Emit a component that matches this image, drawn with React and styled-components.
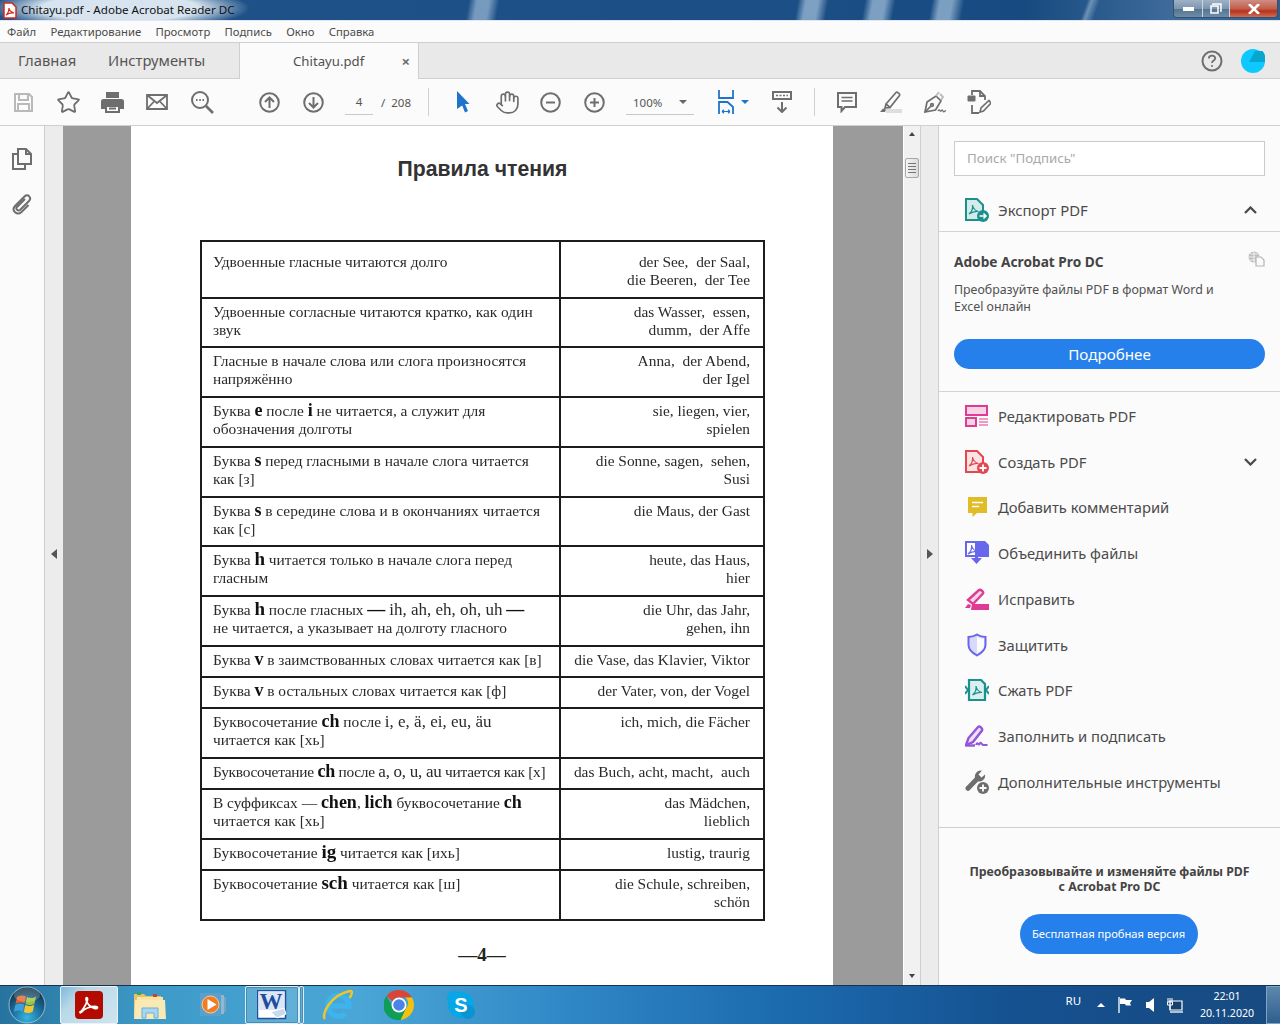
import React from "react";
import styled, { createGlobalStyle } from "styled-components";
import { Hand, Star } from "lucide-react";

const Global = createGlobalStyle`
  html, body { margin: 0; padding: 0; height: 100%; overflow: hidden; background: #fbfbfb; }
  * { box-sizing: border-box; }
  #root { height: 100%; }
`;

const UI = `"Noto Sans", "Open Sans", "Liberation Sans", sans-serif`;

const Window = styled.div`
  width: 1280px;
  height: 1024px;
  display: flex;
  flex-direction: column;
  font-family: ${UI};
  color: #4b4b4b;
  overflow: hidden;
`;

const TitleBar = styled.div`
  height: 21px;
  flex: none;
  display: flex;
  align-items: flex-start;
  padding-left: 3px;
  border-bottom: 1px solid #dfe8f0;
  background:
    radial-gradient(ellipse 130px 22px at 120px 8px, rgba(225, 236, 245, 0.95) 60%, rgba(225, 236, 245, 0) 100%),
    linear-gradient(100deg, transparent 462px, rgba(190, 215, 235, 0.55) 470px, rgba(190, 215, 235, 0.55) 482px, transparent 492px),
    linear-gradient(100deg, transparent 786px, rgba(190, 215, 235, 0.6) 794px, rgba(190, 215, 235, 0.6) 806px, transparent 816px),
    linear-gradient(100deg, transparent 852px, rgba(190, 215, 235, 0.6) 860px, rgba(190, 215, 235, 0.6) 872px, transparent 882px),
    linear-gradient(100deg, transparent 918px, rgba(190, 215, 235, 0.6) 926px, rgba(190, 215, 235, 0.6) 938px, transparent 950px),
    linear-gradient(110deg, transparent 1022px, rgba(190, 215, 235, 0.45) 1026px, transparent 1034px),
    linear-gradient(90deg, #1f5288 0%, #1c4f86 60%, #174a80 80%, #3f6c9b 92%, #2f5f92 100%);
`;

const TitleIcon = styled.svg`
  margin-top: 2px;
  flex: none;
`;

const TitleText = styled.span`
  font-size: 11.6px;
  line-height: 20px;
  margin-left: 4px;
  color: #111;
  white-space: nowrap;
`;

const WinButtons = styled.div`
  margin-left: auto;
  margin-right: 2px;
  display: flex;
  height: 18px;
  border: 1px solid #33506f;
  border-top: 0;
  border-radius: 0 0 4px 4px;
  overflow: hidden;
`;

const WinButton = styled.div`
  width: ${(p) => p.$w}px;
  display: flex;
  align-items: center;
  justify-content: center;
  border-left: ${(p) => (p.$first ? "0" : "1px solid #c9d6e2")};
  background: ${(p) =>
    p.$close
      ? "linear-gradient(#cf8d82 0%, #c2604e 50%, #b8321c 65%, #cf6d55 100%)"
      : "linear-gradient(#9fb2c6 0%, #7d95ae 50%, #557590 55%, #6f8ca8 100%)"};
`;

const MenuBar = styled.div`
  height: 22px;
  flex: none;
  display: flex;
  align-items: center;
  gap: 14.3px;
  padding-left: 7px;
  font-size: 11.3px;
  background: #fbfbfb;
  border-bottom: 1px solid #cfcfcf;
`;

const TabBar = styled.div`
  height: 36px;
  flex: none;
  display: flex;
  background: #e9e9e9;
  border-bottom: 1px solid #cfcfcf;
`;

const NavTab = styled.div`
  width: ${(p) => p.$w}px;
  padding-left: ${(p) => p.$pad}px;
  line-height: 35px;
  font-size: 14.8px;
  color: #555;
`;

const DocTab = styled.div`
  width: 180px;
  height: 36px;
  display: flex;
  align-items: center;
  padding: 0 8px 0 53px;
  font-size: 13.2px;
  background: #fbfbfb;
  border-left: 1px solid #cfcfcf;
  border-right: 1px solid #cfcfcf;
  color: #505050;
`;

const CloseX = styled.span`
  margin-left: auto;
  font-size: 15px;
  font-weight: 700;
  color: #6e6e6e;
`;

const TabRight = styled.div`
  margin-left: auto;
  display: flex;
  align-items: center;
  gap: 18px;
  padding-right: 15px;
`;

const ToolBar = styled.div`
  height: 47px;
  flex: none;
  display: flex;
  align-items: center;
  padding-left: 1.5px;
  background: #fbfbfb;
  border-bottom: 1px solid #cfcfcf;
`;

const Tool = styled.div`
  width: ${(p) => p.$w || 44.5}px;
  height: 30px;
  flex: none;
  display: flex;
  align-items: center;
  justify-content: center;
`;

const Gap = styled.div`
  width: ${(p) => p.$w}px;
  flex: none;
`;

const Divider = styled.div`
  width: 1px;
  height: 28px;
  flex: none;
  background: #cfcfcf;
`;

const PageField = styled.div`
  width: 28px;
  height: 25px;
  flex: none;
  margin-top: 1px;
  border-bottom: 1px solid #c8c8c8;
  font-size: 11.5px;
  line-height: 24px;
  text-align: center;
  color: #555;
`;

const PageTotal = styled.div`
  width: 44px;
  flex: none;
  padding-left: 8px;
  font-size: 11.5px;
  color: #555;
  white-space: pre;
`;

const ZoomField = styled.div`
  width: 68px;
  height: 25px;
  flex: none;
  margin-top: 1px;
  display: flex;
  align-items: center;
  justify-content: space-between;
  padding: 0 7px;
  border-bottom: 1px solid #c8c8c8;
  font-size: 11.5px;
  color: #555;
`;

const Caret = styled.span`
  width: 0;
  height: 0;
  flex: none;
  border-left: 4px solid transparent;
  border-right: 4px solid transparent;
  ${(p) =>
    p.$up
      ? `border-bottom: 4.5px solid ${p.$color || "#666"};`
      : `border-top: 4.5px solid ${p.$color || "#666"};`}
`;

const Body = styled.div`
  flex: 1;
  min-height: 0;
  display: flex;
`;

const LeftRail = styled.div`
  width: 45px;
  flex: none;
  display: flex;
  flex-direction: column;
  align-items: center;
  gap: 23px;
  padding: 22px 0 0;
  background: #fbfbfb;
  border-right: 1px solid #cfcfcf;
`;

const Strip = styled.div`
  width: ${(p) => p.$w}px;
  flex: none;
  display: flex;
  align-items: center;
  justify-content: center;
  padding-bottom: 3px;
  background: #ececec;
  border-right: ${(p) => (p.$edge ? "1px solid #cfcfcf" : "0")};
  border-left: ${(p) => (p.$lead ? "1px solid #cfcfcf" : "0")};
`;

const Arrow = styled.span`
  width: 0;
  height: 0;
  border-top: 5px solid transparent;
  border-bottom: 5px solid transparent;
  ${(p) => (p.$dir === "left" ? "border-right: 6px solid #555;" : "border-left: 6px solid #555;")}
`;

const Viewer = styled.div`
  width: 840px;
  flex: none;
  display: flex;
  padding-left: 68px;
  background: #9b9b9b;
  overflow: hidden;
`;

const Page = styled.div`
  width: 702px;
  flex: none;
  padding: 30px 68px 0 69px;
  background: #fff;
  color: #2a2a2a;
  font-family: "Liberation Serif", serif;
`;

const PageTitle = styled.h1`
  margin: 0 0 58px;
  height: 26px;
  font: 700 21.2px/26px "Liberation Sans", sans-serif;
  text-align: center;
  color: #333;
`;

const Table = styled.div`
  width: 565px;
  border: 2px solid #1c1c1c;
  border-bottom: 0;
  filter: blur(0.25px);
`;

const Row = styled.div`
  height: ${(p) => p.$h}px;
  display: flex;
  border-bottom: 2px solid #1c1c1c;
  font-size: 15.4px;
  line-height: 18px;
`;

const LeftCell = styled.div`
  width: 357px;
  flex: none;
  padding: ${(p) => p.$top}px 0 0 11px;
  letter-spacing: ${(p) => (p.$tight ? "-0.27px" : "0")};
  white-space: pre;
`;

const RightCell = styled.div`
  flex: 1;
  padding: ${(p) => p.$top}px 13px 0 0;
  border-left: 2px solid #1c1c1c;
  text-align: right;
  white-space: pre;
`;

const Key = styled.b`
  font-size: ${(p) => p.$size || 18}px;
  line-height: 0;
  color: #111;
`;

const Lat = styled.span`
  font-size: 17px;
  line-height: 0;
`;

const PageNumber = styled.div`
  margin-top: 23px;
  padding-right: 1px;
  text-align: center;
  font-size: 19px;
  font-weight: 700;
  line-height: 22px;
  color: #222;
`;

const ScrollTrack = styled.div`
  width: 17px;
  flex: none;
  display: flex;
  flex-direction: column;
  align-items: center;
  background: #f1f1f1;
  border-left: 1px solid #fff;
`;

const ScrollArrow = styled.span`
  margin-top: ${(p) => p.$mt}px;
  width: 0;
  height: 0;
  border-left: 3.5px solid transparent;
  border-right: 3.5px solid transparent;
  ${(p) => (p.$up ? "border-bottom: 4px solid #444;" : "border-top: 4px solid #444;")}
`;

const Thumb = styled.div`
  width: 14px;
  height: 20px;
  margin-top: 22px;
  display: flex;
  flex-direction: column;
  justify-content: center;
  align-items: center;
  gap: 2px;
  border: 1px solid #a8a8a8;
  border-radius: 2px;
  background: linear-gradient(90deg, #f4f4f4, #dcdcdc);
`;

const Grip = styled.i`
  width: 8px;
  height: 1px;
  background: #777;
`;

const Panel = styled.div`
  flex: 1;
  display: flex;
  flex-direction: column;
  background: #fbfbfb;
`;

const Search = styled.div`
  margin: 15px 15px 0;
  height: 35px;
  padding-left: 12px;
  font-size: 13.3px;
  line-height: 33px;
  color: #a9a9a9;
  background: #fff;
  border: 1px solid #cbcbcb;
`;

const ExportRow = styled.div`
  margin-top: 16px;
  height: 40px;
  flex: none;
  display: flex;
  align-items: center;
  gap: 8px;
  padding: 0 23px 3px 25px;
  border-bottom: 1px solid #d4d4d4;
  font-size: 14.9px;
`;

const Chevron = styled.svg`
  margin-left: auto;
`;

const Card = styled.div`
  height: 160px;
  flex: none;
  padding: 22px 15px 0;
  border-bottom: 1px solid #d4d4d4;
`;

const CardTitle = styled.div`
  display: flex;
  justify-content: space-between;
  font-size: 13.7px;
  font-weight: 700;
  line-height: 16px;
  color: #444;
`;

const GlobeSvg = styled.svg`
  margin-top: -3px;
`;

const CardText = styled.p`
  margin: 11px 0 0;
  font-size: 12.4px;
  line-height: 17px;
  color: #505050;
`;

const BlueButton = styled.div`
  margin-top: 24px;
  height: 30px;
  border-radius: 15px;
  background: #2680eb;
  color: #fff;
  font-size: 15.2px;
  line-height: 30px;
  text-align: center;
`;

const ToolList = styled.div`
  height: 436px;
  flex: none;
  padding-top: 1px;
  border-bottom: 1px solid #cfcfcf;
`;

const ToolItem = styled.div`
  height: 45.75px;
  display: flex;
  align-items: center;
  gap: 8px;
  padding: 0 23px 0 25px;
  font-size: 14.75px;
`;

const IconSlot = styled.span`
  width: 26px;
  height: 26px;
  flex: none;
  display: flex;
  align-items: center;
  justify-content: center;
`;

const Promo = styled.div`
  flex: 1;
  display: flex;
  flex-direction: column;
  align-items: center;
  padding-top: 36px;
  font-size: 12.3px;
  font-weight: 700;
  line-height: 15px;
  color: #444;
  text-align: center;
`;

const TrialButton = styled.div`
  width: 178px;
  height: 40px;
  margin: 20px 2px 0 0;
  border-radius: 20px;
  background: #2680eb;
  color: #fff;
  font-size: 11.2px;
  font-weight: 400;
  line-height: 40px;
`;

const TaskBar = styled.div`
  height: 39px;
  flex: none;
  display: flex;
  align-items: center;
  border-top: 1px solid #16324f;
  background: linear-gradient(90deg, #27739f 0%, #3e9bc8 12%, #4aa6d6 28%, #2f86c5 45%, #1c6cb0 60%, #15508f 80%, #174a80 100%);
  color: #fff;
`;

const Orb = styled.div`
  width: 60px;
  flex: none;
  display: flex;
  justify-content: center;
  padding-right: 6px;
`;

const TaskItem = styled.div`
  width: ${(p) => p.$w}px;
  height: 38px;
  flex: none;
  display: flex;
  align-items: center;
  justify-content: center;
  ${(p) =>
    p.$state === "active" &&
    "background: linear-gradient(135deg, #7db9d9 0%, #b9d9e9 30%, #cfe4ef 100%); border: 1px solid #e8f2f8; border-radius: 2px;"}
  ${(p) =>
    p.$state === "open" &&
    "background: rgba(255,255,255,0.14); border: 1px solid #dcebf5; box-shadow: inset 0 0 0 1px rgba(0,40,80,0.25); border-radius: 2px;"}
`;

const Tray = styled.div`
  margin-left: auto;
  display: flex;
  align-items: center;
  height: 38px;
`;

const TrayLang = styled.span`
  font-size: 11.5px;
  width: 31px;
  padding-bottom: 10px;
`;

const TrayIcon = styled.span`
  width: 24.5px;
  flex: none;
  display: flex;
  justify-content: center;
`;

const Clock = styled.div`
  width: 78px;
  padding-left: 2px;
  text-align: center;
  font-size: 10.6px;
  line-height: 17px;
`;

const ShowDesktop = styled.div`
  width: 14px;
  height: 38px;
  margin-left: 1px;
  border: 1px solid #7ea3c4;
  border-right: 0;
  background: linear-gradient(#5d87ad, #2f5f90);
`;

// toolbar drawings
const G = "#6e6e6e";
const Save = () => (
  <svg width="21" height="21" viewBox="0 0 21 21" fill="none" stroke="#b9b9b9" strokeWidth="2">
    <path d="M2 2h14l3 3v14H2z" />
    <path d="M6 2v6h9V2M5 19v-7h11v7" />
  </svg>
);
const Printer = () => (
  <svg width="23" height="21" viewBox="0 0 23 21">
    <path fill={G} d="M5 0h13v6H5zM2.500 7h18A2.500 2.500 0 0 1 23 9.500V17h-4v-4H4v4H0V9.500A2.500 2.500 0 0 1 2.500 7z" />
    <path fill="none" stroke={G} strokeWidth="2" d="M5 14h13v6H5zM8 16.500h7" />
  </svg>
);
const Envelope = () => (
  <svg width="22" height="16" viewBox="0 0 22 16" fill="none" stroke={G} strokeWidth="1.8">
    <path d="M1 1h20v14H1zM1 1l10 8 10-8M1 15l7.500-8M21 15l-7.500-8" />
  </svg>
);
const Find = () => (
  <svg width="24" height="24" viewBox="0 0 24 24" fill="none" stroke={G}>
    <circle cx="10" cy="10" r="8" strokeWidth="2" />
    <path d="M16 16l7 7" strokeWidth="2.600" />
    <path d="M6 10h1.500M9.300 10h1.500M12.500 10H14" strokeWidth="2" />
  </svg>
);
const Circled = ({ kind, size = 21 }) => (
  <svg width={size} height={size} viewBox="0 0 21 21" fill="none" stroke={G} strokeWidth="2">
    <circle cx="10.500" cy="10.500" r="9.300" />
    {kind === "up" && <path d="M10.500 16V5.500M6 10l4.500-4.500L15 10" />}
    {kind === "down" && <path d="M10.500 5v10.500M6 11l4.500 4.500L15 11" />}
    {kind === "minus" && <path d="M6 10.500h9" />}
    {kind === "plus" && <path d="M6 10.500h9M10.500 6v9" />}
  </svg>
);
const Pointer = () => (
  <svg width="13" height="22" viewBox="0 0 13 22">
    <path fill="#1f74c9" d="M0 0l12.500 13H8l3 7-3 1.500-2.800-7L0 18z" />
  </svg>
);
const FitWidth = () => (
  <svg width="16" height="25" viewBox="0 0 16 25" fill="none" stroke="#1f74c9" strokeWidth="1.800">
    <path d="M1 0v8h14V0" />
    <path d="M1 24V12h8.500l5.500 5v7" />
    <path d="M4 21.500h8M4 21.500l2-1.800M4 21.500l2 1.800M12 21.500l-2-1.800M12 21.500l-2 1.800" strokeWidth="1.200" />
  </svg>
);
const ScrollMode = () => (
  <svg width="20" height="22" viewBox="0 0 20 22" fill="none" stroke={G} strokeWidth="2">
    <rect x="1" y="1" width="18" height="7" />
    <path d="M10 11v10M5.500 16.500L10 21l4.500-4.500" />
    <path d="M4 4.500h12" strokeDasharray="2 1.500" strokeWidth="1.500" />
  </svg>
);
const Comment = () => (
  <svg width="20" height="21" viewBox="0 0 20 21" fill="none" stroke={G} strokeWidth="2">
    <path d="M1 1h18v14H8l-3.500 4v-4H1z" />
    <path d="M4.500 5.500h11M4.500 9h11" strokeWidth="1.300" />
  </svg>
);
const Marker = () => (
  <svg width="22" height="22" viewBox="0 0 22 22" fill="none">
    <path stroke={G} strokeWidth="1.700" d="M6 13L16 1.500c1-1 4.500 1.500 3.500 3L10 16.500 6 13zM6 13l-1 4 5-.5" />
    <path fill={G} d="M0 21l3-3.500 3 1-1 2.500z" />
    <rect x="6" y="18" width="16" height="4" fill="#dedede" />
  </svg>
);
const PenNib = () => (
  <svg width="23" height="23" viewBox="0 0 23 23" fill="none" stroke={G} strokeWidth="1.700">
    <path d="M1 21l2-10L12 5l5 5-5.500 9z" />
    <path d="M1 21l6-6" />
    <circle cx="8" cy="14" r="1.300" />
    <path d="M12 5l3-4M16 3l3 3-2 3" stroke="#bdbdbd" strokeWidth="2" />
    <path d="M14 20c1.500-3 2 1 3 0s1-2 2 0 1.500 0 3-.5" strokeWidth="1.300" />
  </svg>
);
const EditDoc = () => (
  <svg width="24" height="24" viewBox="0 0 24 24" fill="none" stroke={G} strokeWidth="1.800">
    <path d="M5 5V1h8l5 5v4M5 15v8h7" />
    <path d="M13 1v5h5" />
    <rect x="0.500" y="5.500" width="8" height="6" rx="1" fill={G} stroke="none" />
    <path d="M13 22l1-4 8-7.500 2 2.500-7.500 8z" strokeWidth="1.600" />
  </svg>
);
const Help = () => (
  <svg width="22" height="22" viewBox="0 0 22 22" fill="none" stroke={G}>
    <circle cx="11" cy="11" r="9.500" strokeWidth="2" />
    <path d="M7.800 8.500C8 4.500 14.500 5 14.200 8.500c-.2 2.200-3.200 2-3.200 4.500" strokeWidth="1.800" />
    <circle cx="11" cy="16" r="1" fill={G} stroke="none" />
  </svg>
);
const Avatar = () => (
  <svg width="24" height="24" viewBox="0 0 24 24">
    <circle cx="12" cy="12" r="12" fill="#0cc9ff" />
    <path fill="#08a6cf" d="M14 2h7.500A12 12 0 0 1 24 13H8z" />
  </svg>
);
const Pages = () => (
  <svg width="20" height="22" viewBox="0 0 20 22" fill="none" stroke={G} strokeWidth="2">
    <path d="M6 16V1h8l5 5v10z" />
    <path d="M14 1v5h5M6 6H1v15h12v-5" />
  </svg>
);
const Clip = () => (
  <svg width="21" height="22" viewBox="0 0 21 22" fill="none" stroke={G} strokeWidth="2">
    <path d="M13 6l-8 8c-2 2 1 4.500 3 3l9-9c3-3-1-8-4.500-4.500L3 13c-4 4.500 2 10 6.500 6l7-7" />
  </svg>
);

// tool panel drawings
const PdfMark = ({ color, x = 0, y = 0 }) => (
  <path
    transform={`translate(${x} ${y})`}
    fill="none"
    stroke={color}
    strokeWidth="1.200"
    d="M3 13c2.500-2 4-6 3.500-9M6.500 4c.5 3 3 6 6 6.500M3 13c3-2 6-3 9.500-2.500"
  />
);
const ExportIcon = () => (
  <svg width="24" height="24" viewBox="0 0 24 24">
    <path fill="#d3ebe9" stroke="#1c8f8f" strokeWidth="2" d="M1 1h11l6 6v15H1z" />
    <PdfMark color="#1c8f8f" x="1" y="3" />
    <circle cx="18" cy="18" r="6" fill="#1c8f8f" />
    <path stroke="#fff" strokeWidth="1.600" fill="none" d="M14.500 18h6.500M18.500 15.500L21 18l-2.500 2.500" />
  </svg>
);
const EditIcon = () => (
  <svg width="24" height="22" viewBox="0 0 24 22" fill="none" stroke="#de3c94" strokeWidth="2">
    <rect x="1" y="1" width="21" height="9" fill="#f6d4e6" />
    <rect x="1" y="13" width="10" height="8" fill="#f6d4e6" />
    <path d="M14 14h9M14 17h9M14 20h9" strokeWidth="1.200" />
  </svg>
);
const CreateIcon = () => (
  <svg width="24" height="24" viewBox="0 0 24 24">
    <path fill="#fbe3e3" stroke="#e34850" strokeWidth="2" d="M1 1h11l6 6v15H1z" />
    <PdfMark color="#e34850" x="1" y="3" />
    <circle cx="18" cy="18" r="6" fill="#e34850" />
    <path stroke="#fff" strokeWidth="1.800" d="M14.500 18h7M18 14.500v7" />
  </svg>
);
const NoteIcon = () => (
  <svg width="21" height="22" viewBox="0 0 21 22">
    <path fill="#e0bd27" d="M1 1h19v16H10l-4.500 4v-4H1z" />
    <path stroke="#fff" strokeWidth="1.700" d="M5 6.500h11M5 10.500h7" />
  </svg>
);
const MergeIcon = () => (
  <svg width="24" height="24" viewBox="0 0 24 24">
    <path fill="#fff" stroke="#6767ec" strokeWidth="2" d="M1 1h10v14H1z" />
    <PdfMark color="#6767ec" x="0" y="0" />
    <path fill="#6767ec" d="M12 0h8l4 4v12H12z" />
    <path stroke="#6767ec" strokeWidth="3" d="M11.500 13v6" />
    <path fill="#6767ec" d="M6 17h11l-5.500 6z" />
  </svg>
);
const FixIcon = () => (
  <svg width="24" height="22" viewBox="0 0 24 22" fill="none">
    <path stroke="#de3c94" strokeWidth="2.400" fill="#f6d4e6" d="M3 12L14 2c1.500-1.200 5 2 4 3.500L8 16 3 12z" />
    <path fill="#de3c94" d="M0 20l3-4 3 1-1 3zM7 16h17v6H6z" />
  </svg>
);
const ShieldIcon = () => (
  <svg width="20" height="24" viewBox="0 0 20 24">
    <path fill="#d9d9fa" stroke="#6767ec" strokeWidth="2" d="M10 1.500c3 2 5.500 2.500 8.500 2.500v8c0 5-4 8-8.500 10.500C5.500 20 1.500 17 1.500 12V4C4.500 4 7 3.500 10 1.500z" />
    <path fill="#fbfbfb" d="M10 3.500v17c4-2.500 7-4.500 7-8.500V5.500c-3 0-5-.500-7-2z" />
  </svg>
);
const CompressIcon = () => (
  <svg width="24" height="22" viewBox="0 0 24 22" fill="none" stroke="#1c8f8f" strokeWidth="2.200">
    <path fill="#d9eeed" d="M4 1h12l4 4v16H4z" />
    <PdfMark color="#1c8f8f" x="4.500" y="3" />
    <path d="M0 7l3 4-3 4M24 7l-3 4 3 4" strokeWidth="2" />
  </svg>
);
const SignIcon = () => (
  <svg width="24" height="22" viewBox="0 0 24 22" fill="none" stroke="#9256d9" strokeWidth="2.400">
    <path fill="#ecdff9" d="M1 20l2.500-7L13 2c1.500-1.500 5 1.500 4 3.500L8 17z" />
    <path d="M1 20.500h9" />
    <path strokeWidth="2" d="M11 20c1.500-4 2 0 3-.5s1-3 2.500-1 1 1.500 3 1.500h3" />
  </svg>
);
const MoreIcon = () => (
  <svg width="24" height="24" viewBox="0 0 24 24">
    <path fill={G} d="M17 .500a6 6 0 0 0-7 7L.8 17c-1.500 2 1.500 5 3.500 3.500L13 11.500a6 6 0 0 0 7-7l-3.500 3L13.500 4.500z" />
    <circle cx="18" cy="18" r="6" fill={G} />
    <path stroke="#fff" strokeWidth="1.800" d="M14.500 18h7M18 14.500v7" />
  </svg>
);
const GlobeDoc = () => (
  <GlobeSvg width="17" height="16" viewBox="0 0 17 16" fill="none">
    <circle cx="6" cy="6" r="5.500" fill="#bdbdbd" />
    <path stroke="#fbfbfb" strokeWidth="0.800" d="M6 .5v11M.5 6h11M2 3h8M2 9h8" />
    <path fill="#fbfbfb" stroke="#b5b5b5" strokeWidth="1.200" d="M8 6h5l3 3v6H8z" />
  </GlobeSvg>
);
const Chev = ({ up }) => (
  <Chevron width="13" height="8" viewBox="0 0 13 8" fill="none" stroke="#4b4b4b" strokeWidth="2.300">
    <path d={up ? "M1 7l5.500-5.500L12 7" : "M1 1l5.500 5.500L12 1"} />
  </Chevron>
);

// taskbar drawings
const WinOrb = () => (
  <svg width="38" height="38" viewBox="0 0 38 38">
    <defs>
      <radialGradient id="orb" cx="50%" cy="85%" r="75%">
        <stop offset="0" stopColor="#35b6e0" />
        <stop offset="0.55" stopColor="#1b6d9c" />
        <stop offset="1" stopColor="#12384f" />
      </radialGradient>
    </defs>
    <circle cx="19" cy="19" r="18" fill="url(#orb)" stroke="#b5cbd8" strokeWidth="0.800" />
    <path fill="#e8622a" d="M9 11c3-2 6-2 9-.5l-1.500 7c-3-1.500-6-1.500-9 .5z" />
    <path fill="#9cc53b" d="M19 11c3 1.500 6 1.500 9-.5l-1.500 7c-3 2-6 2-9 .5z" />
    <path fill="#3e9fdb" d="M7.300 19c3-2 6-2 9-.5l-1.500 7c-3-1.500-6-1.500-9 .5z" />
    <path fill="#f4c430" d="M17.300 19c3 1.500 6 1.500 9-.5l-1.500 7c-3 2-6 2-9 .5z" />
    <ellipse cx="19" cy="9" rx="13" ry="7" fill="#fff" opacity="0.2" />
  </svg>
);
const AcrobatTile = () => (
  <svg width="28" height="28" viewBox="0 0 28 28">
    <rect width="28" height="28" rx="4" fill="#b30b00" />
    <path fill="none" stroke="#fff" strokeWidth="1.800" d="M5 21c2-.5 5.500-6 7.500-12 .5-2-1.500-3.500-1.500-1 0 4 5 9 9 9.500 3.500.3 3-2 0-2-4.500 0-10 2-12 4-2 2-3 3-3 1.500z" />
  </svg>
);
const Folder = () => (
  <svg width="32" height="28" viewBox="0 0 32 28">
    <path fill="#e6c06a" d="M0 3h10l2 2h15v19H0z" />
    <rect x="3" y="1" width="4" height="3" fill="#3aa655" />
    <path fill="#f6e4a6" d="M3 6h26v4H3z" />
    <rect x="19" y="3" width="4" height="3" fill="#d23b30" />
    <path fill="#f9e9b5" d="M1 9h30l1 19H0z" />
    <path fill="#a9d6ee" stroke="#6ab0d8" d="M8 17h16v10h-4v-5h-8v5H8z" />
  </svg>
);
const Media = () => (
  <svg width="27" height="24" viewBox="0 0 27 24">
    <rect x="0" y="0" width="21" height="23" fill="#5ba0cc" />
    <rect x="21" y="2" width="3" height="19" fill="#8fb8d3" />
    <rect x="24" y="4" width="2" height="15" fill="#7aa3c0" />
    <circle cx="10.500" cy="11.500" r="8.500" fill="#ee7d24" stroke="#fbcf9b" />
    <path fill="#fff" d="M7.500 6l9 5.500-9 5.500z" />
  </svg>
);
const Word = () => (
  <svg width="30" height="30" viewBox="0 0 30 30">
    <rect x="0.500" y="0.500" width="28" height="28" fill="#fff" stroke="#23509b" strokeWidth="1.500" />
    <rect x="2" y="2" width="25" height="18" fill="#dbe7f6" />
    <text x="14" y="19" textAnchor="middle" fontFamily="Liberation Serif, serif" fontWeight="700" fontSize="23" fill="#1d4ea0">W</text>
    <path fill="#c9d9ee" stroke="#fff" d="M14 22l13-4 2 6-9 4z" />
  </svg>
);
// logo, not a letter of page text
const IE = () => (
  <svg width="32" height="32" viewBox="0 0 32 32" fill="none">
    <path stroke="#3db4ec" strokeWidth="5.500" d="M8 17h19a10.500 10.500 0 1 0-3.500 7.500" />
    <path stroke="#f0c52c" strokeWidth="2.500" d="M3 30C-1 26 8 6 28 2c3-.5 2 3-.5 7" />
  </svg>
);
const Chrome = () => (
  <svg width="30" height="30" viewBox="0 0 30 30">
    <path fill="#db4437" d="M15 0a15 15 0 0 1 13 7.500H15a7.500 7.500 0 0 0-6.500 3.800L2.500 6A15 15 0 0 1 15 0z" />
    <path fill="#f4c20d" d="M28 7.500a15 15 0 0 1-11.500 22.400L21.500 19a7.500 7.500 0 0 0 0-11.500z" />
    <path fill="#0f9d58" d="M2.500 6l6 10.500A7.500 7.500 0 0 0 21.500 19l-5 11A15 15 0 0 1 2.500 6z" />
    <circle cx="15" cy="15" r="7.500" fill="#fff" />
    <circle cx="15" cy="15" r="5.800" fill="#4a84e8" />
  </svg>
);
const Skype = () => (
  <svg width="30" height="30" viewBox="0 0 30 30">
    <circle cx="15" cy="15" r="13" fill="#07a6e6" />
    <circle cx="8" cy="8" r="7" fill="#07a6e6" />
    <circle cx="22" cy="22" r="7" fill="#0a95d2" />
    <text x="15" y="22" textAnchor="middle" fontFamily="Liberation Sans, sans-serif" fontWeight="700" fontSize="20" fill="#fff">S</text>
  </svg>
);
const Flag = () => (
  <svg width="15" height="16" viewBox="0 0 15 16">
    <path stroke="#fff" strokeWidth="1.300" d="M1 0v16" />
    <path fill="#fff" d="M2 1.500h5l1 1.500h6l-2 3 1 2.500H8L7 7H2z" />
  </svg>
);
const Speaker = () => (
  <svg width="8" height="14" viewBox="0 0 8 14">
    <path fill="#fff" d="M0 4h3l5-4v14l-5-4H0z" />
  </svg>
);
const Network = () => (
  <svg width="16" height="15" viewBox="0 0 16 15" fill="none" stroke="#fff">
    <path d="M3 3h12v9H3z" fill="#17406d" strokeWidth="1.200" />
    <path d="M1 0v4M3 0v4M5 0v4M.5 4h5v3h-5zM3 7v5" strokeWidth="1" />
    <path d="M3 14h13" strokeWidth="1.300" />
  </svg>
);

const rows = [
  { h: 57, top: 11, l: "Удвоенные гласные читаются долго", r: "der See,  der Saal,\ndie Beeren,  der Tee" },
  { h: 49, l: "Удвоенные согласные читаются кратко, как один\nзвук", r: "das Wasser,  essen,\ndumm,  der Affe" },
  { h: 50, l: "Гласные в начале слова или слога произносятся\nнапряжённо", r: "Anna,  der Abend,\nder Igel" },
  { h: 50, l: <>Буква <Key>e</Key> после <Key>i</Key> не читается, а служит для{"\n"}обозначения долготы</>, r: "sie, liegen, vier,\nspielen" },
  { h: 50, l: <>Буква <Key>s</Key> перед гласными в начале слога читается{"\n"}как [з]</>, r: "die Sonne, sagen,  sehen,\nSusi" },
  { h: 49, l: <>Буква <Key>s</Key> в середине слова и в окончаниях читается{"\n"}как [с]</>, r: "die Maus, der Gast" },
  { h: 50, l: <>Буква <Key $size={19}>h</Key> читается только в начале слога перед{"\n"}гласным</>, r: "heute, das Haus,\nhier" },
  { h: 50, l: <>Буква <Key $size={19}>h</Key> после гласных <Key>—</Key> <Lat>ih, ah, eh, oh, uh</Lat> <Key>—</Key>{"\n"}не читается, а указывает на долготу гласного</>, r: "die Uhr, das Jahr,\ngehen, ihn" },
  { h: 31, l: <>Буква <Key>v</Key> в заимствованных словах читается как [в]</>, r: "die Vase, das Klavier, Viktor" },
  { h: 31, l: <>Буква <Key>v</Key> в остальных словах читается как [ф]</>, r: "der Vater, von, der Vogel" },
  { h: 50, l: <>Буквосочетание <Key>ch</Key> после <Lat>i, e, ä, ei, eu, äu</Lat>{"\n"}читается как [хь]</>, r: "ich, mich, die Fächer" },
  { h: 31, tight: true, l: <>Буквосочетание <Key>ch</Key> после <Lat>a, o, u, au</Lat> читается как [х]</>, r: "das Buch, acht, macht,  auch" },
  { h: 50, l: <>В суффиксах — <Key>chen</Key>, <Key>lich</Key> буквосочетание <Key>ch</Key>{"\n"}читается как [хь]</>, r: "das Mädchen,\nlieblich" },
  { h: 31, l: <>Буквосочетание <Key $size={19}>ig</Key> читается как [ихь]</>, r: "lustig, traurig" },
  { h: 50, l: <>Буквосочетание <Key $size={19}>sch</Key> читается как [ш]</>, r: "die Schule, schreiben,\nschön" },
];

const tools = [
  [EditIcon, "Редактировать PDF"],
  [CreateIcon, "Создать PDF", true],
  [NoteIcon, "Добавить комментарий"],
  [MergeIcon, "Объединить файлы"],
  [FixIcon, "Исправить"],
  [ShieldIcon, "Защитить"],
  [CompressIcon, "Сжать PDF"],
  [SignIcon, "Заполнить и подписать"],
  [MoreIcon, "Дополнительные инструменты"],
];

const menu = ["Файл", "Редактирование", "Просмотр", "Подпись", "Окно", "Справка"];

export default function App() {
  return (
    <Window>
      <Global />
      <TitleBar>
        <TitleIcon width="14" height="17" viewBox="0 0 14 17">
          <path fill="#fff" stroke="#d2281e" strokeWidth="1.500" d="M1 1h8l4 4v11H1z" />
          <path fill="none" stroke="#d2281e" strokeWidth="1.200" d="M3 13c2-1 3-5 3-7 0 2 2 4 5 5-3-.5-6 .5-8 2z" />
        </TitleIcon>
        <TitleText>Chitayu.pdf - Adobe Acrobat Reader DC</TitleText>
        <WinButtons>
          <WinButton $w={28} $first>
            <svg width="11" height="4"><rect width="11" height="4" fill="#fff" /></svg>
          </WinButton>
          <WinButton $w={27}>
            <svg width="12" height="11" viewBox="0 0 12 11" fill="none" stroke="#fff" strokeWidth="1.500">
              <path d="M3 2V1h8v7h-1" />
              <rect x="1" y="3" width="7" height="7" />
            </svg>
          </WinButton>
          <WinButton $w={48} $close>
            <svg width="12" height="10" viewBox="0 0 12 10" stroke="#fff" strokeWidth="2.600">
              <path d="M1 0l10 10M11 0L1 10" />
            </svg>
          </WinButton>
        </WinButtons>
      </TitleBar>

      <MenuBar>
        {menu.map((m) => (
          <span key={m}>{m}</span>
        ))}
      </MenuBar>

      <TabBar>
        <NavTab $w={90} $pad={18}>Главная</NavTab>
        <NavTab $w={149} $pad={18}>Инструменты</NavTab>
        <DocTab>
          Chitayu.pdf
          <CloseX>×</CloseX>
        </DocTab>
        <TabRight>
          <Help />
          <Avatar />
        </TabRight>
      </TabBar>

      <ToolBar>
        <Tool><Save /></Tool>
        <Tool><Star size={25} color={G} strokeWidth={1.7} /></Tool>
        <Tool><Printer /></Tool>
        <Tool><Envelope /></Tool>
        <Tool><Find /></Tool>
        <Gap $w={23} />
        <Tool><Circled kind="up" /></Tool>
        <Tool><Circled kind="down" /></Tool>
        <Gap $w={9} />
        <PageField>4</PageField>
        <PageTotal>{"/  208"}</PageTotal>
        <Gap $w={11} />
        <Divider />
        <Gap $w={12} />
        <Tool><Pointer /></Tool>
        <Tool $w={43}><Hand size={25} color={G} strokeWidth={1.6} /></Tool>
        <Tool><Circled kind="minus" /></Tool>
        <Tool $w={43}><Circled kind="plus" /></Tool>
        <Gap $w={10} />
        <ZoomField>
          100%
          <Caret />
        </ZoomField>
        <Gap $w={17} />
        <Tool $w={30}>
          <FitWidth />
        </Tool>
        <Caret $color="#1f74c9" />
        <Gap $w={11} />
        <Tool $w={44}><ScrollMode /></Tool>
        <Gap $w={10} />
        <Divider />
        <Gap $w={10} />
        <Tool $w={44}><Comment /></Tool>
        <Tool $w={44}><Marker /></Tool>
        <Tool $w={44}><PenNib /></Tool>
        <Tool $w={44}><EditDoc /></Tool>
      </ToolBar>

      <Body>
        <LeftRail>
          <Pages />
          <Clip />
        </LeftRail>
        <Strip $w={18}>
          <Arrow $dir="left" />
        </Strip>
        <Viewer>
          <Page>
            <PageTitle>Правила чтения</PageTitle>
            <Table>
              {rows.map((r, i) => (
                <Row key={i} $h={r.h}>
                  <LeftCell $top={r.top ?? 4} $tight={r.tight}>{r.l}</LeftCell>
                  <RightCell $top={r.top ?? 4}>{r.r}</RightCell>
                </Row>
              ))}
            </Table>
            <PageNumber>—4—</PageNumber>
          </Page>
        </Viewer>
        <ScrollTrack>
          <ScrollArrow $up $mt={6} />
          <Thumb>
            <Grip />
            <Grip />
            <Grip />
            <Grip />
          </Thumb>
          <ScrollArrow $mt={796} />
        </ScrollTrack>
        <Strip $w={19} $lead $edge>
          <Arrow $dir="right" />
        </Strip>
        <Panel>
          <Search>Поиск "Подпись"</Search>
          <ExportRow>
            <IconSlot><ExportIcon /></IconSlot>
            Экспорт PDF
            <Chev up />
          </ExportRow>
          <Card>
            <CardTitle>
              Adobe Acrobat Pro DC
              <GlobeDoc />
            </CardTitle>
            <CardText>
              Преобразуйте файлы PDF в формат Word и
              <br />
              Excel онлайн
            </CardText>
            <BlueButton>Подробнее</BlueButton>
          </Card>
          <ToolList>
            {tools.map(([Icon, label, more]) => (
              <ToolItem key={label}>
                <IconSlot><Icon /></IconSlot>
                {label}
                {more && <Chev />}
              </ToolItem>
            ))}
          </ToolList>
          <Promo>
            Преобразовывайте и изменяйте файлы PDF
            <br />
            с Acrobat Pro DC
            <TrialButton>Бесплатная пробная версия</TrialButton>
          </Promo>
        </Panel>
      </Body>

      <TaskBar>
        <Orb><WinOrb /></Orb>
        <TaskItem $w={58} $state="active"><AcrobatTile /></TaskItem>
        <TaskItem $w={64}><Folder /></TaskItem>
        <TaskItem $w={63}><Media /></TaskItem>
        <TaskItem $w={54} $state="open"><Word /></TaskItem>
        <TaskItem $w={5} $state="open" />
        <TaskItem $w={68}><IE /></TaskItem>
        <TaskItem $w={54}><Chrome /></TaskItem>
        <TaskItem $w={70}><Skype /></TaskItem>
        <Tray>
          <TrayLang>RU</TrayLang>
          <Caret $up $color="#fff" />
          <Gap $w={9} />
          <TrayIcon><Flag /></TrayIcon>
          <TrayIcon><Speaker /></TrayIcon>
          <TrayIcon><Network /></TrayIcon>
          <Clock>
            22:01
            <br />
            20.11.2020
          </Clock>
          <ShowDesktop />
        </Tray>
      </TaskBar>
    </Window>
  );
}
